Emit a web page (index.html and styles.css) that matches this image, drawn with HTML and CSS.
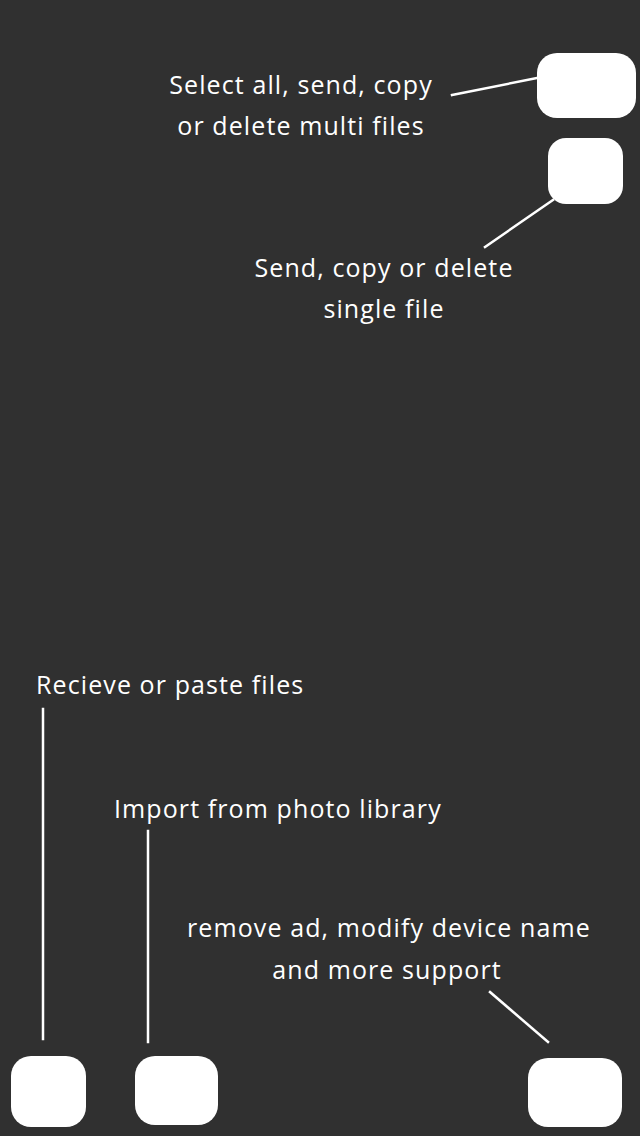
FILE: index.html
```html
<!DOCTYPE html>
<html>
<head>
<meta charset="utf-8">
<link rel="stylesheet" href="styles.css">
</head>
<body>
<div class="overlay">
  <svg class="lines" width="640" height="1136" viewBox="0 0 640 1136">
    <g stroke="#ffffff" stroke-width="2.5" stroke-linecap="square" fill="none">
      <line x1="452" y1="95" x2="537" y2="78"/>
      <line x1="485" y1="247" x2="553" y2="200"/>
      <line x1="43" y1="709" x2="43" y2="1039"/>
      <line x1="148" y1="831" x2="148" y2="1042"/>
      <line x1="490" y1="992" x2="548" y2="1042"/>
    </g>
  </svg>

  <div class="label label-multi">Select all, send, copy<br>or delete multi files</div>
  <div class="label label-single">Send, copy or delete<br>single file</div>
  <div class="label label-receive">Recieve or paste files</div>
  <div class="label label-import">Import from photo library</div>
  <div class="label label-more">remove ad, modify device name<br>and more support</div>

  <div class="spot spot-multi"></div>
  <div class="spot spot-single"></div>
  <div class="spot spot-receive"></div>
  <div class="spot spot-import"></div>
  <div class="spot spot-more"></div>
</div>
</body>
</html>
```

FILE: styles.css
```css
html, body {
  margin: 0;
  padding: 0;
  background: #303030;
}

.overlay {
  position: relative;
  width: 640px;
  height: 1136px;
  overflow: hidden;
  background: #303030;
  font-family: "Open Sans", "Noto Sans", "DejaVu Sans", sans-serif;
  color: #ffffff;
}

.lines {
  position: absolute;
  left: 0;
  top: 0;
}

.label {
  position: absolute;
  font-size: 25px;
  line-height: 41px;
  white-space: nowrap;
  letter-spacing: 1.1px;
}

.label-multi {
  left: 101px;
  width: 400px;
  top: 64px;
  text-align: center;
}

.label-single {
  left: 184px;
  width: 400px;
  top: 247px;
  text-align: center;
}

.label-receive {
  left: 36px;
  top: 664px;
}

.label-import {
  left: 114px;
  top: 788px;
}

.label-more {
  left: 187px;
  width: 400px;
  top: 906px;
  line-height: 42px;
  text-align: center;
}

.spot {
  position: absolute;
  background: #ffffff;
  border-radius: 20px;
}

.spot-multi {
  left: 537px;
  top: 53px;
  width: 99px;
  height: 65px;
}

.spot-single {
  left: 548px;
  top: 138px;
  width: 75px;
  height: 66px;
  border-radius: 18px;
}

.spot-receive {
  left: 11px;
  top: 1056px;
  width: 75px;
  height: 71px;
}

.spot-import {
  left: 135px;
  top: 1056px;
  width: 83px;
  height: 69px;
}

.spot-more {
  left: 528px;
  top: 1058px;
  width: 94px;
  height: 69px;
}
```
